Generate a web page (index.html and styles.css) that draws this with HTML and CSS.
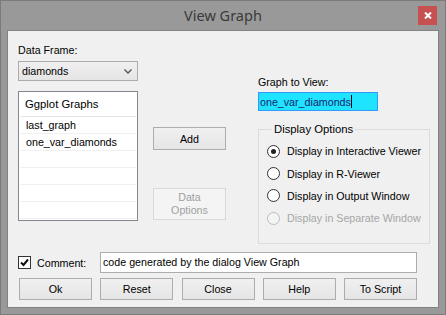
FILE: index.html
```html
<!DOCTYPE html>
<html lang="en">

<head>
  <meta charset="UTF-8" />
  <title>View Graph</title>
  <link rel="stylesheet" href="styles.css">
</head>

<body>
  <div class="window">
    <div class="titlebar">
      <span></span>
      <span class="title">View Graph</span>
      <button class="close-btn" title="Close">
        <svg width="8" height="7" viewBox="0 0 8 7"><path d="M1 0.5 L7 6.5 M7 0.5 L1 6.5" stroke="#fff" stroke-width="2"/></svg>
      </button>
    </div>

    <div class="client">
      <div class="main">
        <div class="col-left">
          <label class="lbl">Data Frame:</label>
          <div class="combo">
            <span>diamonds</span>
            <svg width="8" height="5" viewBox="0 0 8 5"><path d="M0.5 0.5 L4 4 L7.5 0.5" fill="none" stroke="#555" stroke-width="1.4"/></svg>
          </div>
          <div class="listbox">
            <div class="list-head">Ggplot Graphs</div>
            <div class="list-row">last_graph</div>
            <div class="list-row">one_var_diamonds</div>
            <div class="list-row"></div>
            <div class="list-row"></div>
            <div class="list-row"></div>
            <div class="list-row"></div>
          </div>
        </div>

        <div class="col-mid">
          <button class="btn add-btn">Add</button>
          <button class="btn opts-btn" disabled>Data<br>Options</button>
        </div>

        <div class="col-right">
          <label class="lbl">Graph to View:</label>
          <div class="graph-input"><span>one_var_diamonds</span><span class="caret"></span></div>
          <fieldset class="group">
            <legend>Display Options</legend>
            <div class="radio-row"><span class="radio checked"></span>Display in Interactive Viewer</div>
            <div class="radio-row"><span class="radio"></span>Display in R-Viewer</div>
            <div class="radio-row"><span class="radio"></span>Display in Output Window</div>
            <div class="radio-row disabled"><span class="radio"></span>Display in Separate Window</div>
          </fieldset>
        </div>
      </div>

      <div class="comment-row">
        <div class="check-wrap">
          <span class="checkbox">
            <svg width="11" height="11" viewBox="0 0 11 11"><path d="M2 5.5 L4.5 8 L9 2.5" fill="none" stroke="#111" stroke-width="2"/></svg>
          </span>
          <span>Comment:</span>
        </div>
        <div class="comment-input">code generated by the dialog View Graph</div>
      </div>

      <div class="button-row">
        <button class="btn">Ok</button>
        <button class="btn">Reset</button>
        <button class="btn">Close</button>
        <button class="btn">Help</button>
        <button class="btn">To Script</button>
      </div>
    </div>
  </div>
</body>

</html>
```

FILE: styles.css
```css
body {
  margin: 0;
  font-family: "Liberation Sans", Arial, sans-serif;
  font-size: 10.7px;
  color: #000;
}

.window {
  width: 446px;
  height: 315px;
  box-sizing: border-box;
  border: 1px solid #7b7b7b;
  background: #999999;
}

.titlebar {
  height: 29px;
  display: grid;
  grid-template-columns: 1fr auto 1fr;
  align-items: start;
}

.title {
  font-family: "Noto Sans", "Open Sans", sans-serif;
  font-size: 14.5px;
  line-height: 29px;
  color: #3a3a3a;
}

.close-btn {
  justify-self: end;
  margin: 5px 8px 0 0;
  width: 19px;
  height: 19px;
  padding: 0;
  border: none;
  background: #c75050;
  display: flex;
  align-items: center;
  justify-content: center;
}

.client {
  margin: 0 6px;
  height: 278px;
  box-sizing: border-box;
  border: 1px solid #828282;
  background: #f0f0f0;
}

.main {
  display: flex;
  padding-left: 10px;
}

.lbl {
  display: block;
  line-height: 13px;
}

/* left column */
.col-left {
  width: 120px;
  margin-top: 13px;
}

.combo {
  margin-top: 4px;
  height: 20px;
  box-sizing: border-box;
  border: 1px solid #acacac;
  background: linear-gradient(#f0f0f0, #e5e5e5);
  display: flex;
  align-items: center;
  justify-content: space-between;
  padding: 0 5px 0 3px;
}

.listbox {
  margin-top: 10px;
  height: 130px;
  box-sizing: border-box;
  border: 1px solid #828790;
  background: #fff;
  padding: 0 1px;
}

.list-head {
  height: 24px;
  line-height: 24px;
  padding-left: 5px;
  border-bottom: 1px solid #e5e5e5;
  font-size: 11.3px;
}

.list-row {
  height: 16px;
  line-height: 16px;
  padding-left: 6px;
  border-bottom: 1px solid #f0f0f0;
}

/* middle column */
.col-mid {
  width: 73px;
  margin-left: 15px;
  display: flex;
  flex-direction: column;
}

.btn {
  font-family: "Liberation Sans", Arial, sans-serif;
  font-size: 10.7px;
  color: #000;
  width: 73px;
  height: 22px;
  padding: 0;
  border: 1px solid #adadad;
  background: linear-gradient(#f0f0f0, #e5e5e5);
}

.add-btn {
  margin-top: 96px;
  height: 23px;
}

.opts-btn {
  margin-top: 38px;
  height: 32px;
  line-height: 13px;
  color: #a0a0a0;
  border-color: #d9d9d9;
  background: #f4f4f4;
}

/* right column */
.col-right {
  width: 172px;
  margin-left: 32px;
  margin-top: 45px;
}

.graph-input {
  margin-top: 3px;
  width: 120px;
  height: 19px;
  box-sizing: border-box;
  border: 1px solid #3399ff;
  background: #1fe4ff;
  color: #1a1f70;
  display: flex;
  align-items: center;
  padding-left: 1px;
}

.caret {
  width: 1px;
  height: 13px;
  background: #000;
}

.group {
  margin: 12px 0 0 0;
  height: 121px;
  box-sizing: border-box;
  border: 1px solid #dcdcdc;
  padding: 4px 0 0 8px;
}

.group legend {
  padding: 0 2px;
  margin-left: 5px;
  line-height: 13px;
  font-size: 11.3px;
}

.radio-row {
  height: 22.4px;
  display: flex;
  align-items: center;
  gap: 7px;
}

.radio {
  width: 13px;
  height: 13px;
  box-sizing: border-box;
  border: 1px solid #333;
  border-radius: 50%;
  background: #fff;
  display: flex;
  align-items: center;
  justify-content: center;
}

.radio.checked::after {
  content: "";
  width: 5px;
  height: 5px;
  border-radius: 50%;
  background: #222;
}

.radio-row.disabled {
  color: #a6a6a6;
}

.radio-row.disabled .radio {
  border-color: #bcbcbc;
  background: #f4f4f4;
}

/* bottom */
.comment-row {
  margin-top: 8px;
  padding-left: 10px;
  display: flex;
  align-items: center;
}

.check-wrap {
  width: 82px;
  display: flex;
  align-items: center;
  gap: 6px;
}

.checkbox {
  width: 13px;
  height: 13px;
  box-sizing: border-box;
  border: 1px solid #333;
  background: #fff;
  display: flex;
  align-items: center;
  justify-content: center;
}

.comment-input {
  width: 317px;
  height: 21px;
  box-sizing: border-box;
  border: 1px solid #abadb3;
  background: #fff;
  line-height: 19px;
  padding-left: 2px;
}

.button-row {
  margin-top: 5px;
  padding: 0 21px 0 11px;
  display: flex;
  justify-content: space-between;
}
```
